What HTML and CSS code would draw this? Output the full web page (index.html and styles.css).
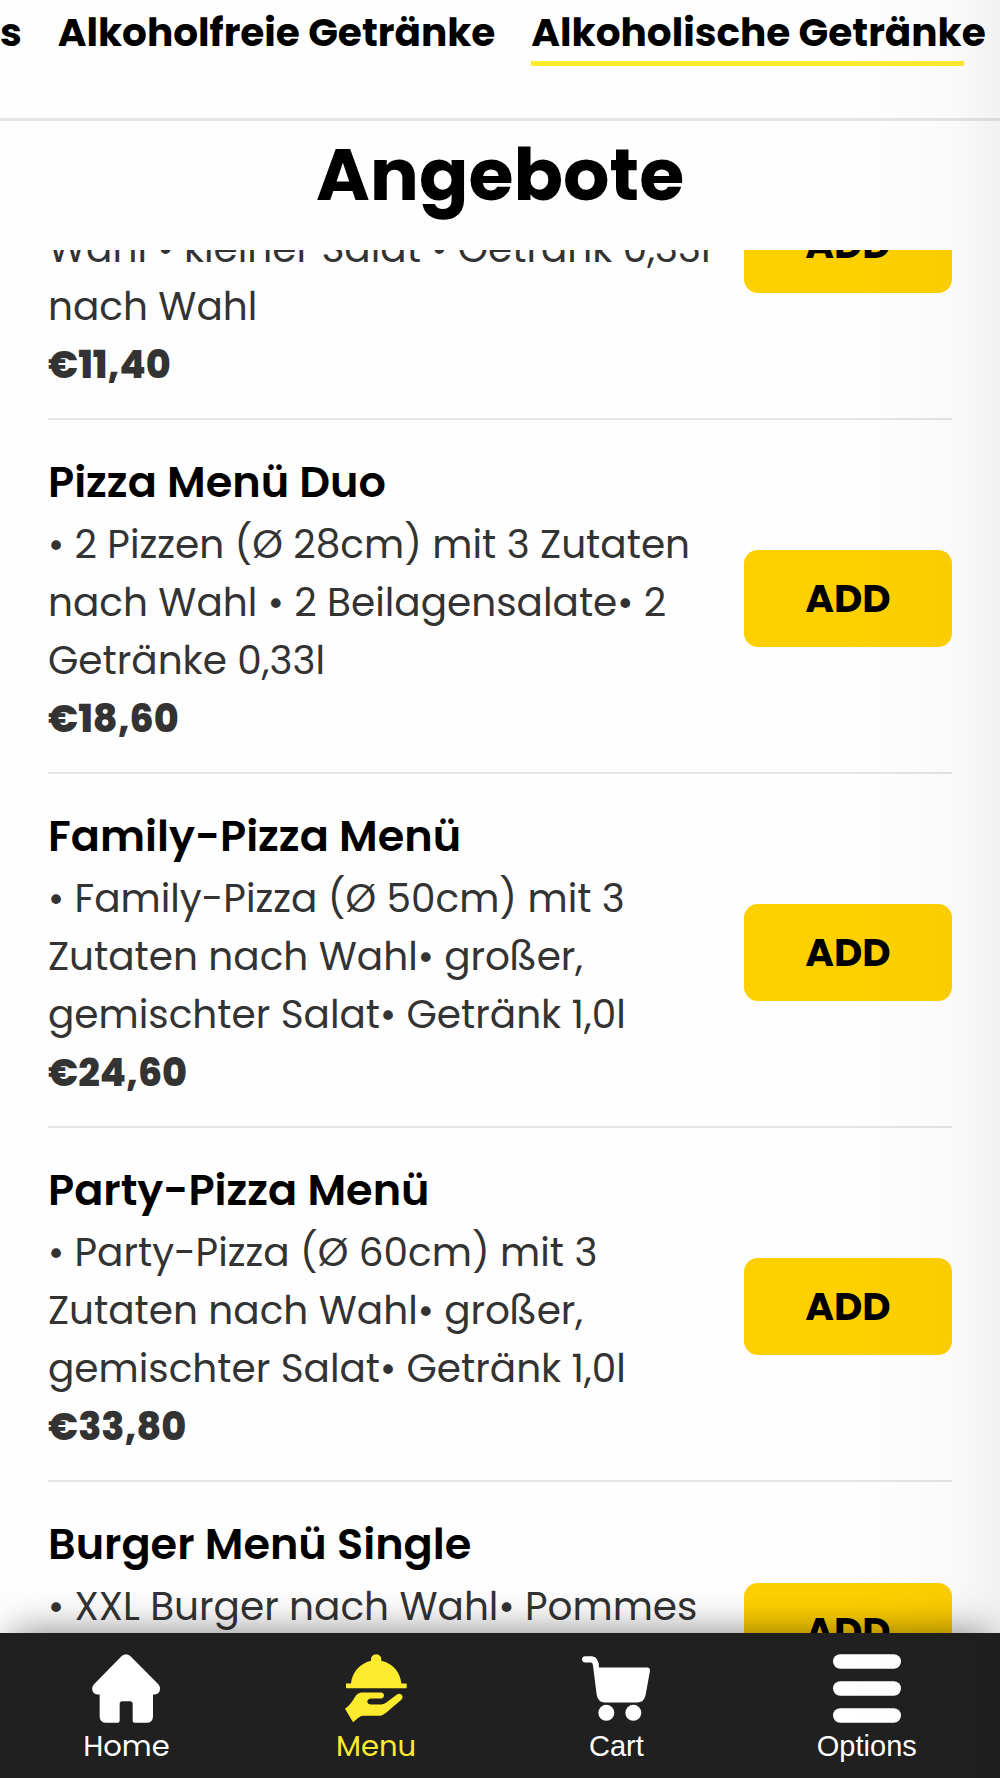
FILE: index.html
```html
<!DOCTYPE html>
<html lang="de">
<head>
<meta charset="utf-8">
<meta name="viewport" content="width=device-width, initial-scale=1">
<title>Angebote</title>
<link rel="stylesheet" href="styles.css">
</head>
<body>
<div class="app">
  <nav class="tabs" aria-label="Kategorien">
    <a class="tab" href="#s">s</a>
    <a class="tab" href="#alkoholfrei">Alkoholfreie Getränke</a>
    <a class="tab tab-active" href="#alkoholisch">Alkoholische Getränke</a>
  </nav>
  <h1 class="title">Angebote</h1>
  <main class="menu">
    <ul class="list">
      <li class="item">
        <div class="info">
          <p class="desc">Wahl • kleiner Salat • Getränk 0,33l<br>nach Wahl</p>
          <p class="price">€11,40</p>
        </div>
        <button class="add" type="button">ADD</button>
      </li>
      <li class="item">
        <div class="info">
          <h2 class="name">Pizza Menü Duo</h2>
          <p class="desc">• 2 Pizzen (Ø 28cm) mit 3 Zutaten<br>nach Wahl • 2 Beilagensalate• 2<br>Getränke 0,33l</p>
          <p class="price">€18,60</p>
        </div>
        <button class="add" type="button">ADD</button>
      </li>
      <li class="item">
        <div class="info">
          <h2 class="name">Family-Pizza Menü</h2>
          <p class="desc">• Family-Pizza (Ø 50cm) mit 3<br>Zutaten nach Wahl• großer,<br>gemischter Salat• Getränk 1,0l</p>
          <p class="price">€24,60</p>
        </div>
        <button class="add" type="button">ADD</button>
      </li>
      <li class="item">
        <div class="info">
          <h2 class="name">Party-Pizza Menü</h2>
          <p class="desc">• Party-Pizza (Ø 60cm) mit 3<br>Zutaten nach Wahl• großer,<br>gemischter Salat• Getränk 1,0l</p>
          <p class="price">€33,80</p>
        </div>
        <button class="add" type="button">ADD</button>
      </li>
      <li class="item item-short">
        <div class="info">
          <h2 class="name">Burger Menü Single</h2>
          <p class="desc">• XXL Burger nach Wahl• Pommes</p>
        </div>
        <button class="add" type="button">ADD</button>
      </li>
    </ul>
  </main>
  <nav class="bar" aria-label="Hauptnavigation">
    <a class="bar-link" href="#home">
      <svg class="icon" viewBox="98 102 204 206" aria-hidden="true"><path fill="currentColor" d="M188 107Q200 98 212 107L297 192C307 203 302 223 286 223H281V288Q281 308 261 308H226Q220 308 220 302V251Q220 243 212 243H189Q181 243 181 251V302Q181 308 175 308H141Q121 308 121 288V223H116C98 223 94 203 104 192Z"/></svg>
      <span>Home</span>
    </a>
    <a class="bar-link bar-active" href="#menu">
      <svg class="icon" viewBox="96 102 204 206" aria-hidden="true"><path fill="currentColor" d="M183 122A16 16 0 1 1 214 122C250 130 271 158 274 190H290V204H108V190H123C126 158 149 130 183 122ZM105 266C117 257 126 246 134 232Q142 217 157 217H213Q222 218 222 226Q221 235 213 235H184Q172 236 172 244Q172 253 184 253H213Q221 253 228 248L261 223Q269 218 275 224Q281 231 274 239L230 276Q218 287 205 287H160Q152 287 145 293L129 306Z"/></svg>
      <span>Menu</span>
    </a>
    <a class="bar-link bar-plain" href="#cart">
      <svg class="icon" viewBox="96 102 204 206" aria-hidden="true"><g fill="currentColor"><path d="M106 108H126Q147 110 147 142H292Q300 142 300 151L287 224Q283 247 261 247H165Q144 247 140 224L129 136Q128 127 123 127H106Q96 126 96 117Q97 108 106 108Z"/><circle cx="169" cy="278" r="24"/><circle cx="250" cy="278" r="24"/></g></svg>
      <span>Cart</span>
    </a>
    <a class="bar-link bar-plain" href="#options">
      <svg class="icon" viewBox="159 312 204 206" aria-hidden="true"><g fill="currentColor"><rect x="159" y="312" width="204" height="44" rx="22"/><rect x="159" y="393" width="204" height="44" rx="22"/><rect x="159" y="474" width="204" height="44" rx="22"/></g></svg>
      <span>Options</span>
    </a>
  </nav>
</div>
</body>
</html>
```

FILE: styles.css
```css
* { box-sizing: border-box; margin: 0; padding: 0; }

body {
  font-family: Poppins, Inter, sans-serif;
  color: #333;
  background: #fefefe;
}

.app {
  position: relative;
  display: flex;
  flex-direction: column;
  height: 100vh;
  overflow: hidden;
}

/* soft shade along the right edge */
.app::after {
  content: "";
  position: absolute;
  inset: 0 0 0 auto;
  width: 160px;
  pointer-events: none;
  background: linear-gradient(to right, transparent, rgba(0, 0, 0, .01) 55%, rgba(0, 0, 0, .02) 75%, rgba(0, 0, 0, .05));
}

.tabs {
  display: flex;
  align-items: flex-start;
  gap: 36px;
  flex: none;
  height: 121px;
  overflow: hidden;
  border-bottom: 3px solid #e5e5e5;
}

.tab {
  flex: none;
  padding-top: 4px;
  font-size: 39px;
  line-height: 57px;
  font-weight: 700;
  color: #000;
  text-decoration: none;
  white-space: nowrap;
}

.tab-active::after {
  content: "";
  display: block;
  width: 433px;
  height: 5px;
  background: #ffeb2e;
}

.title {
  flex: none;
  height: 129px;
  font-size: 73px;
  line-height: 108px;
  font-weight: 700;
  text-align: center;
  color: #000;
}

.menu {
  flex: 1;
  min-height: 0;
  overflow: hidden;
  padding: 0 48px;
}

/* the list rests in a scrolled state */
.list {
  margin-top: -184px;
  list-style: none;
}

.item {
  display: flex;
  align-items: center;
  justify-content: space-between;
  min-height: 354px;
  padding-top: 4px;
  border-bottom: 2px solid #e5e5e5;
}

.info {
  align-self: flex-end;
  padding: 28px 0 24px;
  font-size: 39px;
  line-height: 58px;
  white-space: nowrap;
}

.name {
  padding-bottom: 4px;
  font-size: 43px;
  line-height: 60px;
  font-weight: 600;
  color: #000;
}

.price {
  font-size: 38px;
  font-weight: 800;
}

.add {
  flex: none;
  width: 208px;
  height: 97px;
  border: 0;
  border-radius: 14px;
  background: #ffd000;
  color: #000;
  font: inherit;
  font-size: 39px;
  font-weight: 700;
}

.item-short { min-height: 296px; }
.item-short .info { align-self: flex-start; }

.bar {
  position: relative;
  flex: none;
  display: flex;
  justify-content: space-around;
  height: 145px;
  padding-top: 21px;
  background: #202020;
  box-shadow: 0 -12px 36px -12px rgba(0, 0, 0, .5);
}

.bar-link {
  display: flex;
  flex-direction: column;
  align-items: center;
  gap: 3px;
  font-size: 29px;
  line-height: 40px;
  color: #fff;
  text-decoration: none;
}

.bar-plain { font-family: "Liberation Sans", Arial, sans-serif; }
.bar-active { color: #ffeb2e; }

.icon { width: 68px; height: 69px; }
```
